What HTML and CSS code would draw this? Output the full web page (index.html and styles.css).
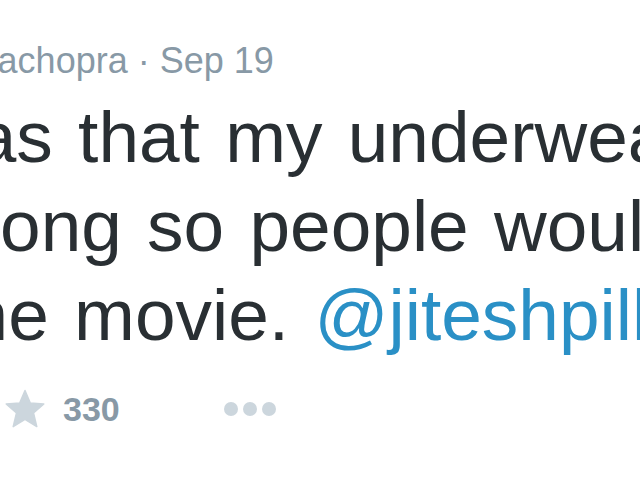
FILE: index.html
```html
<!DOCTYPE html>
<html>
<head>
<meta charset="utf-8">
<link rel="stylesheet" href="styles.css">
</head>
<body>
<div class="tweet">
  <div class="header"><span class="handle">@priyankachopra</span> · <span class="time">Sep 19</span></div>
  <p class="text">was that my underwear<br>wrong so people would<br>The movie. <a class="mention" href="#">@jiteshpillai</a></p>
  <div class="actions">
    <span class="fav">
      <svg class="star" viewBox="0 0 40 40" width="40" height="40"><path d="M20 1.5 L25.3 14 L38.8 15 L28.5 24 L31.8 37.6 L20 30.4 L8.2 37.6 L11.5 24 L1.2 15 L14.7 14 Z" stroke-linejoin="round"/></svg>
      <span class="count">330</span>
    </span>
    <span class="more"><i></i><i></i><i></i></span>
  </div>
</div>
</body>
</html>
```

FILE: styles.css
```css
html, body {
  margin: 0;
  padding: 0;
  background: #ffffff;
  overflow: hidden;
  width: 640px;
  height: 480px;
}
.tweet {
  font-family: "Liberation Sans", Arial, sans-serif;
  width: 640px;
  height: 480px;
  overflow: hidden;
}
.header {
  margin-top: 41px;
  margin-left: -155px;
  font-size: 36px;
  line-height: 40px;
  color: #8899a6;
  white-space: nowrap;
}
.text {
  margin: 11px 0 0 -77px;
  font-size: 73px;
  line-height: 89px;
  word-spacing: 5px;
  color: #292f33;
  white-space: nowrap;
}
.mention {
  color: #2a90c6;
  text-decoration: none;
}
.actions {
  display: flex;
  align-items: center;
  margin-top: 30px;
  margin-left: 5px;
}
.fav {
  display: flex;
  align-items: center;
  gap: 18px;
}
.star {
  fill: #ccd6dd;
  stroke: #ccd6dd;
  stroke-width: 1.5;
}
.count {
  font-size: 34px;
  font-weight: bold;
  color: #8899a6;
}
.more {
  display: flex;
  gap: 5px;
  margin-left: 104px;
}
.more i {
  display: block;
  width: 14px;
  height: 14px;
  border-radius: 50%;
  background: #ccd6dd;
}
```
